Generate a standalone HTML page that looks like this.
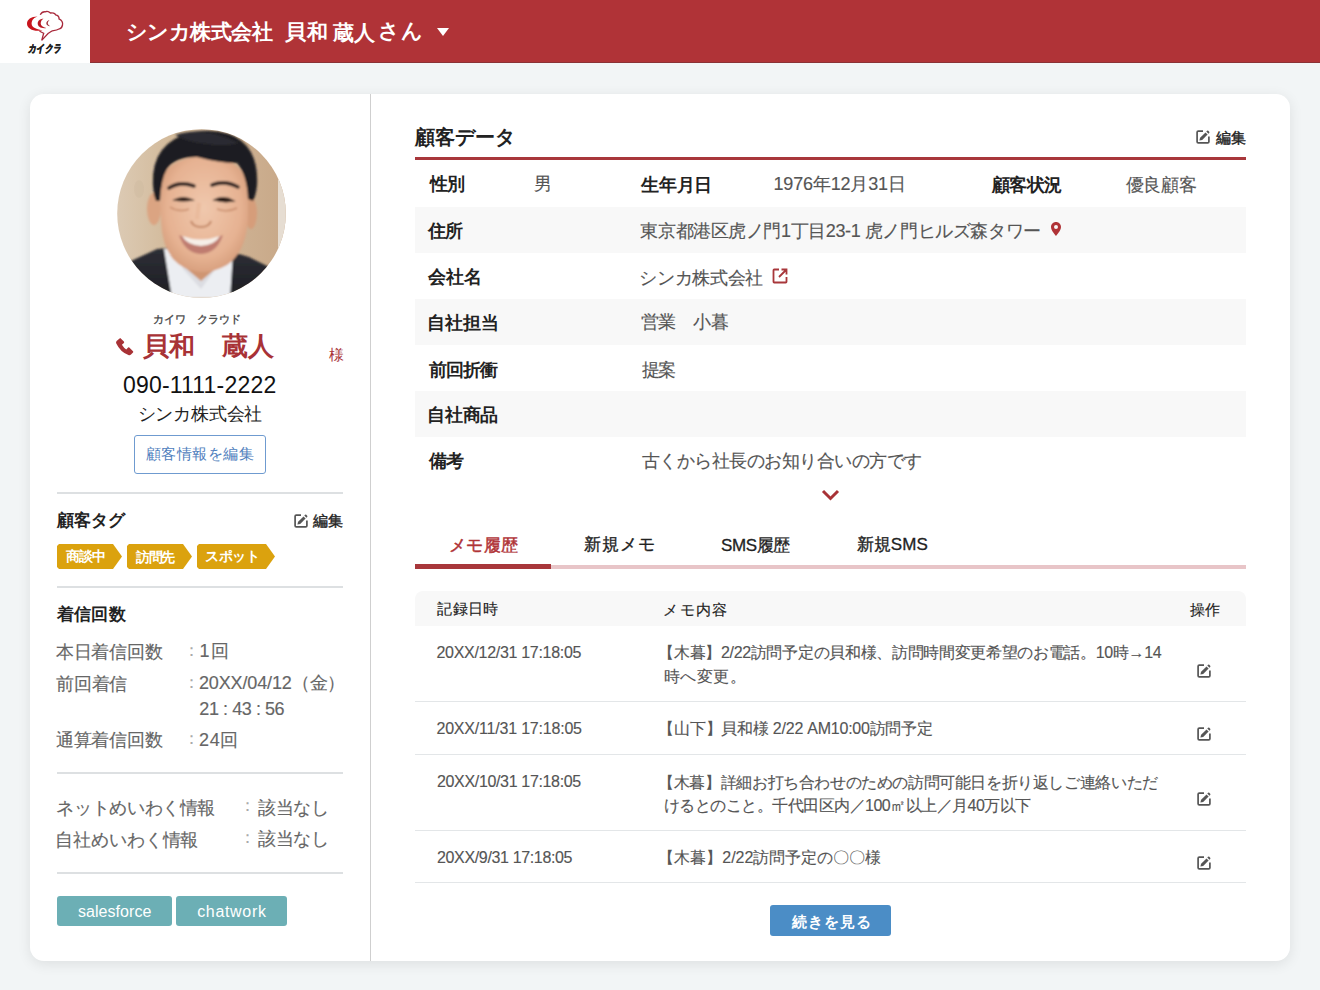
<!DOCTYPE html>
<html lang="ja"><head><meta charset="utf-8">
<style>
*{box-sizing:border-box;margin:0;padding:0}
html,body{width:1320px;height:990px;overflow:hidden}
body{background:#f2f5f6;font-family:"Liberation Sans",sans-serif;color:#333;position:relative}
.a{position:absolute;white-space:nowrap;line-height:1}
#hdr{position:absolute;left:0;top:0;width:90px;height:63px;background:#fff}
#hdrRed{position:absolute;left:90px;top:0;width:1230px;height:63px;background:#b03337;border-bottom:1px solid #8a3236}
#card{position:absolute;left:30px;top:94px;width:1260px;height:867px;background:#fff;border-radius:14px;box-shadow:0 3px 14px rgba(0,0,0,0.09)}
#vdiv{position:absolute;left:370px;top:94px;width:1px;height:867px;background:#cfcfcf}
.hr{position:absolute;left:57px;width:286px;height:2px;background:#dde0e2}
.tag{position:absolute;top:544px;height:25px;background:#dba20e;clip-path:polygon(0 8%,2px 0,calc(100% - 9px) 0,100% 50%,calc(100% - 9px) 100%,2px 100%,0 92%)}
.ext{position:absolute;top:896px;height:30px;background:#6cafb5;border-radius:3px}
.band{position:absolute;left:415px;width:831px;height:46px;background:#f8f8f8}
.rl{position:absolute;left:415px;width:831px;height:1px;background:#e3e6e8}
</style></head><body>

<div id="hdr"></div>
<div id="hdrRed"></div>
<svg class="a" style="left:0;top:0" width="90" height="63" viewBox="0 0 90 63">
<path d="M37.5 16.6C31 16.6 27 19.8 27 23.7C27 27.8 31.5 30.8 38 30.8C40 30.8 41.5 30.6 42.5 30.3C38 29.6 31.6 27.8 31.6 23.7C31.6 19.8 34.5 17.4 37.5 16.6Z" fill="#c8141c"/>
<path d="M43.5 18.8C39.8 18.8 37.7 21 37.7 23.5C37.7 26.2 40.2 28.2 44.5 28.2C45.2 28.2 45.8 28.1 46.2 28C43 27.3 40.7 25.7 40.7 23.5C40.7 21.3 42 19.6 43.5 18.8Z" fill="#b81822"/>
<path d="M49.5 20C47.6 20.5 46.3 22 46.3 23.3C46.3 25 47.8 26.2 50.3 26.2C48.6 25.5 47.8 24.4 47.8 23.3C47.8 22 48.6 20.8 49.5 20Z" fill="#a0303a"/>
<path d="M40.2 14.8C41.5 12.5 43 11.6 45 11.8C47 10.8 49.5 11.8 50.5 13C52.6 12.5 55 13.5 55.6 14.8C58 15.2 59.3 17 59 18.8C61.5 20 63 22.5 62.5 25C62 27.5 60.5 28.6 59.5 28.8C57.5 30.2 54.5 30.6 52.3 30.8C51 31.6 49.5 32.6 48.3 33.3L41.7 40.4L43.7 33.3C42.5 32.6 41 32 39.5 31" stroke="#a8283a" stroke-width="1.3" fill="none"/>
<text x="28" y="52.3" font-size="10.5" font-weight="bold" fill="#222" stroke="#222" stroke-width="0.6" font-style="italic" textLength="33" lengthAdjust="spacingAndGlyphs">カイクラ</text>
</svg>
<svg class="a" style="left:437px;top:28px" width="12" height="8" viewBox="0 0 12 8"><path d="M0 0H12L6 8Z" fill="#fff"/></svg>

<div id="card"></div>
<div id="vdiv"></div>

<!-- avatar -->
<svg class="a" style="left:117px;top:129px" width="169" height="169" viewBox="0 0 169 169">
<defs><clipPath id="cc"><circle cx="84.5" cy="84.5" r="84.3"/></clipPath>
<linearGradient id="wood" x1="0" x2="1"><stop offset="0" stop-color="#dccab4"/><stop offset="0.3" stop-color="#d3bb9c"/><stop offset="0.75" stop-color="#cdb091"/><stop offset="1" stop-color="#c8a888"/></linearGradient>
<radialGradient id="skin" cx="0.5" cy="0.45" r="0.6"><stop offset="0" stop-color="#f0c8ad"/><stop offset="0.7" stop-color="#e6b292"/><stop offset="1" stop-color="#d49a78"/></radialGradient>
<linearGradient id="suit" x1="0" x2="0" y1="0" y2="1"><stop offset="0" stop-color="#2e2f36"/><stop offset="1" stop-color="#1d1e24"/></linearGradient>
<filter id="bl" x="-10%" y="-10%" width="120%" height="120%"><feGaussianBlur stdDeviation="0.8"/></filter>
</defs>
<g clip-path="url(#cc)">
<rect width="169" height="169" fill="url(#wood)"/>
<ellipse cx="22" cy="60" rx="5" ry="9" fill="#bfa58a" opacity="0.15"/>
<rect x="161" y="50" width="8" height="70" fill="#e6ddd2"/>
<g filter="url(#bl)">
<path d="M0 150 L14 132 L40 120 L60 118 L84 126 L112 122 L132 128 L152 138 L169 150 L169 169 L0 169Z" fill="url(#suit)"/>
<path d="M47 120 Q56 119 62 121 L84 150 L104 125 Q112 122 116 124 L113 169 L55 169Z" fill="#eceef2"/>
<path d="M62 121 L84 150 L104 125 L100 138 L84 160 L66 140Z" fill="#dcdde2"/>
<path d="M58 110 L110 110 L110 130 L84 152 L58 130Z" fill="#cf9572"/>
<ellipse cx="37" cy="80" rx="7" ry="16" fill="#dba482"/>
<ellipse cx="134" cy="84" rx="6" ry="16" fill="#d69d7a"/>
<path d="M43 60 Q44 30 86 27 Q128 29 131 60 L131 92 Q128 124 110 136 Q96 144 82 143 Q66 141 56 130 Q45 116 44 92Z" fill="url(#skin)"/>
<path d="M37 66 Q30 20 66 6 Q88 -2 112 5 Q142 16 140 56 Q139 66 136 72 L131 70 Q130 46 120 34 Q102 34 80 28 Q58 28 50 40 Q44 50 43 72 L39 72Z" fill="#1c1c20"/>
<path d="M58 6 Q88 -4 122 14 Q108 18 90 15 Q72 14 58 6Z" fill="#2c2c30"/>
<path d="M52 59 Q63 52 77 57" stroke="#2e2420" stroke-width="3.6" fill="none" stroke-linecap="round"/>
<path d="M95 56 Q108 51 121 58" stroke="#2e2420" stroke-width="3.6" fill="none" stroke-linecap="round"/>
<path d="M57 71 Q66 66 76 71 Q66 73 57 71Z" fill="#2a1c18" stroke="#2a1c18" stroke-width="1.2"/>
<path d="M97 71 Q107 66 117 72 Q107 74 97 71Z" fill="#2a1c18" stroke="#2a1c18" stroke-width="1.2"/>
<path d="M53 78 Q62 84 72 80" stroke="#c98d6c" stroke-width="1.5" fill="none"/>
<path d="M100 80 Q110 84 120 79" stroke="#c98d6c" stroke-width="1.5" fill="none"/>
<path d="M74 92 Q76 98 84 98 Q92 98 94 92" stroke="#c48867" stroke-width="2.2" fill="none"/>
<path d="M82 74 L80 90" stroke="#e6b494" stroke-width="4" fill="none" opacity="0.6"/>
<path d="M62 106 Q84 116 106 106 Q100 124 84 125 Q68 124 62 106Z" fill="#bf7c70"/>
<path d="M65 107 Q84 114 103 107 Q98 116 84 117 Q70 116 65 107Z" fill="#f6efe8"/>
</g>
</g></svg>

<svg class="a" style="left:115px;top:337px" width="19" height="19" viewBox="0 0 19 19"><path fill="#a83236" d="M5.2 0.9L8.9 4.6Q9.5 5.2 8.9 5.9L6.9 7.8Q8.8 11 11.3 12.4L13.1 10.6Q13.7 10 14.3 10.6L18 14.3Q18.6 14.9 18 15.6L16 17.6Q15 18.6 13.4 18.1Q5.5 15.3 1.3 6.6Q0.6 5 1.6 3.9Z"/></svg>
<div class="a" style="left:134px;top:435px;width:132px;height:39px;border:1px solid #6f9bd0;border-radius:3px"></div>

<div class="hr" style="top:492px"></div>
<svg class="a" style="left:294px;top:514px" width="14" height="14" viewBox="0 0 14 14"><path d="M7 1.1H2.3Q1.1 1.1 1.1 2.3V11.7Q1.1 12.9 2.3 12.9H11.7Q12.9 12.9 12.9 11.7V6.6" stroke="#555" stroke-width="1.7" fill="none"/><path d="M3.4 10.6L4.1 7.8L9.5 2.4L11.6 4.5L6.2 9.9Z" fill="#555"/><path d="M10.3 1.6L11.1 0.8Q11.7 0.3 12.3 0.8L13.2 1.7Q13.7 2.3 13.2 2.9L12.4 3.7Z" fill="#555"/></svg>
<div class="tag" style="left:57px;width:65px"></div>
<div class="tag" style="left:127px;width:65px"></div>
<div class="tag" style="left:197px;width:78px"></div>
<div class="hr" style="top:586px"></div>
<div class="hr" style="top:772px"></div>
<div class="hr" style="top:872px"></div>
<div class="ext" style="left:57px;width:115px"></div>
<div class="ext" style="left:176px;width:111px"></div>


<!-- right -->
<svg class="a" style="left:1196px;top:130px" width="14" height="14" viewBox="0 0 14 14"><path d="M7 1.1H2.3Q1.1 1.1 1.1 2.3V11.7Q1.1 12.9 2.3 12.9H11.7Q12.9 12.9 12.9 11.7V6.6" stroke="#555" stroke-width="1.7" fill="none"/><path d="M3.4 10.6L4.1 7.8L9.5 2.4L11.6 4.5L6.2 9.9Z" fill="#555"/><path d="M10.3 1.6L11.1 0.8Q11.7 0.3 12.3 0.8L13.2 1.7Q13.7 2.3 13.2 2.9L12.4 3.7Z" fill="#555"/></svg>
<div class="a" style="left:415px;top:157px;width:831px;height:3px;background:#a8373b"></div>
<div class="band" style="top:207px"></div>
<div class="band" style="top:299px"></div>
<div class="band" style="top:391px"></div>
<svg class="a" style="left:1051px;top:222px" width="10" height="14" viewBox="0 0 10 14"><path d="M5 0C2.2 0 0 2.2 0 5c0 3.5 5 9 5 9s5-5.5 5-9C10 2.2 7.8 0 5 0zm0 7a2 2 0 110-4 2 2 0 010 4z" fill="#b03337"/></svg>
<svg class="a" style="left:772px;top:268px" width="16" height="16" viewBox="0 0 16 16"><path d="M7 1.5H2.2Q1.5 1.5 1.5 2.2V13.8Q1.5 14.5 2.2 14.5H13.8Q14.5 14.5 14.5 13.8V9" stroke="#a8373b" stroke-width="1.8" fill="none"/><path d="M9.5 1.5H14.5V6.5M14.5 1.5L7 9" stroke="#a8373b" stroke-width="1.8" fill="none"/></svg>
<svg class="a" style="left:821px;top:489px" width="19" height="12" viewBox="0 0 19 12"><path d="M2 2L9.5 9.5L17 2" stroke="#a83236" stroke-width="3" fill="none"/></svg>

<div class="a" style="left:415px;top:565px;width:831px;height:4px;background:#e8c5c8"></div>
<div class="a" style="left:415px;top:564px;width:136px;height:5px;background:#a8373b"></div>

<div class="a" style="left:415px;top:591px;width:831px;height:35px;background:#f8f8f8;border-radius:8px 8px 0 0"></div>

<div class="rl" style="top:701px"></div>
<div class="rl" style="top:754px"></div>
<div class="rl" style="top:830px"></div>
<div class="rl" style="top:882px"></div>
<svg class="a" style="left:1197px;top:664px" width="14" height="14" viewBox="0 0 14 14"><path d="M7 1.1H2.3Q1.1 1.1 1.1 2.3V11.7Q1.1 12.9 2.3 12.9H11.7Q12.9 12.9 12.9 11.7V6.6" stroke="#555" stroke-width="1.7" fill="none"/><path d="M3.4 10.6L4.1 7.8L9.5 2.4L11.6 4.5L6.2 9.9Z" fill="#555"/><path d="M10.3 1.6L11.1 0.8Q11.7 0.3 12.3 0.8L13.2 1.7Q13.7 2.3 13.2 2.9L12.4 3.7Z" fill="#555"/></svg>
<svg class="a" style="left:1197px;top:727px" width="14" height="14" viewBox="0 0 14 14"><path d="M7 1.1H2.3Q1.1 1.1 1.1 2.3V11.7Q1.1 12.9 2.3 12.9H11.7Q12.9 12.9 12.9 11.7V6.6" stroke="#555" stroke-width="1.7" fill="none"/><path d="M3.4 10.6L4.1 7.8L9.5 2.4L11.6 4.5L6.2 9.9Z" fill="#555"/><path d="M10.3 1.6L11.1 0.8Q11.7 0.3 12.3 0.8L13.2 1.7Q13.7 2.3 13.2 2.9L12.4 3.7Z" fill="#555"/></svg>
<svg class="a" style="left:1197px;top:792px" width="14" height="14" viewBox="0 0 14 14"><path d="M7 1.1H2.3Q1.1 1.1 1.1 2.3V11.7Q1.1 12.9 2.3 12.9H11.7Q12.9 12.9 12.9 11.7V6.6" stroke="#555" stroke-width="1.7" fill="none"/><path d="M3.4 10.6L4.1 7.8L9.5 2.4L11.6 4.5L6.2 9.9Z" fill="#555"/><path d="M10.3 1.6L11.1 0.8Q11.7 0.3 12.3 0.8L13.2 1.7Q13.7 2.3 13.2 2.9L12.4 3.7Z" fill="#555"/></svg>
<svg class="a" style="left:1197px;top:856px" width="14" height="14" viewBox="0 0 14 14"><path d="M7 1.1H2.3Q1.1 1.1 1.1 2.3V11.7Q1.1 12.9 2.3 12.9H11.7Q12.9 12.9 12.9 11.7V6.6" stroke="#555" stroke-width="1.7" fill="none"/><path d="M3.4 10.6L4.1 7.8L9.5 2.4L11.6 4.5L6.2 9.9Z" fill="#555"/><path d="M10.3 1.6L11.1 0.8Q11.7 0.3 12.3 0.8L13.2 1.7Q13.7 2.3 13.2 2.9L12.4 3.7Z" fill="#555"/></svg>
<div class="a" style="left:770px;top:905px;width:121px;height:31px;background:#4b8dc6;border-radius:3px"></div>

<div class="a" id="t1" style="left:125.64px;top:21.10px;font-size:21.00px;font-weight:bold;color:#fff;letter-spacing:-0.50px;">シンカ株式会社</div>
<div class="a" id="t2" style="left:284.90px;top:21.10px;font-size:21.00px;font-weight:bold;color:#fff;letter-spacing:0.90px;">貝和</div>
<div class="a" id="t2b" style="left:332.52px;top:22.00px;font-size:21.00px;font-weight:bold;color:#fff;letter-spacing:0.72px;">蔵人</div>
<div class="a" id="t2c" style="left:378.00px;top:20.18px;font-size:21.00px;font-weight:bold;color:#fff;letter-spacing:0.84px;">さん</div>
<div class="a" id="furi" style="left:153.00px;top:314.10px;font-size:11.00px;font-weight:bold;color:#555;">カイワ　クラウド</div>
<div class="a" id="name" style="left:142.90px;top:333.10px;font-size:26.00px;font-weight:bold;color:#a83236;letter-spacing:0.22px;">貝和　蔵人</div>
<div class="a" id="sama" style="left:328.90px;top:347.00px;font-size:15.00px;font-weight:normal;color:#a83236;">様</div>
<div class="a" id="tel" style="left:123.00px;top:373.90px;font-size:23.00px;font-weight:normal;color:#111;letter-spacing:0.19px;">090-1111-2222</div>
<div class="a" id="co" style="left:137.64px;top:405.14px;font-size:18.00px;font-weight:normal;color:#222;letter-spacing:-0.20px;">シンカ株式会社</div>
<div class="a" id="editbtn" style="left:146.00px;top:446.10px;font-size:15.00px;font-weight:normal;color:#4f80bd;letter-spacing:0.48px;">顧客情報を編集</div>
<div class="a" id="tagh" style="left:56.90px;top:511.90px;font-size:17.00px;font-weight:bold;color:#222;">顧客タグ</div>
<div class="a" id="tagedit" style="left:312.90px;top:513.18px;font-size:15.00px;font-weight:normal;color:#222;-webkit-text-stroke:0.4px #222;">編集</div>
<div class="a" id="tg1" style="left:65.90px;top:549.10px;font-size:14.00px;font-weight:bold;color:#fff;letter-spacing:-0.90px;">商談中</div>
<div class="a" id="tg2" style="left:135.90px;top:549.55px;font-size:14.00px;font-weight:bold;color:#fff;letter-spacing:-1.20px;">訪問先</div>
<div class="a" id="tg3" style="left:205.10px;top:549.10px;font-size:14.00px;font-weight:bold;color:#fff;letter-spacing:-0.30px;">スポット</div>
<div class="a" id="chak" style="left:56.90px;top:605.90px;font-size:17.00px;font-weight:bold;color:#222;letter-spacing:0.30px;">着信回数</div>
<div class="a" id="hon" style="left:56.00px;top:643.36px;font-size:18.00px;font-weight:normal;color:#666;letter-spacing:-0.27px;-webkit-text-stroke:0.15px #666;">本日着信回数</div>
<div class="a" id="c1" style="left:182.56px;top:641.95px;font-size:17.00px;font-weight:normal;color:#aaa;">：</div>
<div class="a" id="v1" style="left:199.54px;top:642.28px;font-size:18.00px;font-weight:normal;color:#666;letter-spacing:1.11px;-webkit-text-stroke:0.15px #666;">1回</div>
<div class="a" id="zen" style="left:56.00px;top:674.50px;font-size:18.00px;font-weight:normal;color:#666;letter-spacing:-0.18px;-webkit-text-stroke:0.15px #666;">前回着信</div>
<div class="a" id="c2" style="left:182.56px;top:673.88px;font-size:17.00px;font-weight:normal;color:#aaa;">：</div>
<div class="a" id="v2" style="left:199.00px;top:673.83px;font-size:18.00px;font-weight:normal;color:#666;letter-spacing:-0.14px;-webkit-text-stroke:0.15px #666;">20XX/04/12（金）</div>
<div class="a" id="v2b" style="left:199.36px;top:699.86px;font-size:18.00px;font-weight:normal;color:#666;letter-spacing:-0.44px;-webkit-text-stroke:0.15px #666;">21 : 43 : 56</div>
<div class="a" id="tsu" style="left:56.00px;top:731.24px;font-size:18.00px;font-weight:normal;color:#666;letter-spacing:-0.27px;-webkit-text-stroke:0.15px #666;">通算着信回数</div>
<div class="a" id="c3" style="left:182.56px;top:729.78px;font-size:17.00px;font-weight:normal;color:#aaa;">：</div>
<div class="a" id="v3" style="left:199.00px;top:730.80px;font-size:18.00px;font-weight:normal;color:#666;letter-spacing:0.63px;-webkit-text-stroke:0.15px #666;">24回</div>
<div class="a" id="net" style="left:56.36px;top:798.56px;font-size:18.00px;font-weight:normal;color:#666;letter-spacing:-0.37px;-webkit-text-stroke:0.15px #666;">ネットめいわく情報</div>
<div class="a" id="c4" style="left:239.30px;top:797.20px;font-size:17.00px;font-weight:normal;color:#aaa;">：</div>
<div class="a" id="ga1" style="left:258.00px;top:798.56px;font-size:18.00px;font-weight:normal;color:#666;letter-spacing:-0.33px;-webkit-text-stroke:0.15px #666;">該当なし</div>
<div class="a" id="jis" style="left:55.46px;top:830.90px;font-size:18.00px;font-weight:normal;color:#666;letter-spacing:-0.14px;-webkit-text-stroke:0.15px #666;">自社めいわく情報</div>
<div class="a" id="c5" style="left:239.30px;top:829.20px;font-size:17.00px;font-weight:normal;color:#aaa;">：</div>
<div class="a" id="ga2" style="left:258.00px;top:830.14px;font-size:18.00px;font-weight:normal;color:#666;letter-spacing:-0.33px;-webkit-text-stroke:0.15px #666;">該当なし</div>
<div class="a" id="sf" style="left:78.00px;top:904.36px;font-size:16.00px;font-weight:normal;color:#fff;letter-spacing:0.05px;">salesforce</div>
<div class="a" id="cw" style="left:197.18px;top:904.36px;font-size:16.00px;font-weight:normal;color:#fff;letter-spacing:0.67px;">chatwork</div>
<div class="a" id="kd" style="left:415.16px;top:127.42px;font-size:20.00px;font-weight:bold;color:#222;letter-spacing:-0.02px;">顧客データ</div>
<div class="a" id="kdedit" style="left:1215.62px;top:129.66px;font-size:15.00px;font-weight:normal;color:#222;letter-spacing:0.72px;-webkit-text-stroke:0.4px #222;">編集</div>
<div class="a" id="seibetsu" style="left:430.16px;top:175.16px;font-size:18.00px;font-weight:bold;color:#222;letter-spacing:-1.20px;">性別</div>
<div class="a" id="otoko" style="left:534.00px;top:175.10px;font-size:18.00px;font-weight:normal;color:#555;-webkit-text-stroke:0.15px #555;">男</div>
<div class="a" id="seinen" style="left:641.26px;top:175.50px;font-size:18.00px;font-weight:bold;color:#222;letter-spacing:-0.30px;">生年月日</div>
<div class="a" id="birth" style="left:773.46px;top:175.06px;font-size:18.00px;font-weight:normal;color:#555;letter-spacing:-0.17px;-webkit-text-stroke:0.15px #555;">1976年12月31日</div>
<div class="a" id="jokyo" style="left:991.90px;top:175.50px;font-size:18.00px;font-weight:bold;color:#222;letter-spacing:-0.60px;">顧客状況</div>
<div class="a" id="yuryo" style="left:1125.54px;top:175.64px;font-size:18.00px;font-weight:normal;color:#555;letter-spacing:-0.33px;-webkit-text-stroke:0.15px #555;">優良顧客</div>
<div class="a" id="jusho" style="left:428.36px;top:222.40px;font-size:18.00px;font-weight:bold;color:#222;letter-spacing:-1.20px;">住所</div>
<div class="a" id="addr" style="left:640.36px;top:222.38px;font-size:18.00px;font-weight:normal;color:#555;letter-spacing:-0.41px;-webkit-text-stroke:0.15px #555;">東京都港区虎ノ門1丁目23-1 虎ノ門ヒルズ森タワー</div>
<div class="a" id="kaisha" style="left:428.36px;top:267.82px;font-size:18.00px;font-weight:bold;color:#222;letter-spacing:-0.27px;">会社名</div>
<div class="a" id="kaishav" style="left:639.46px;top:268.80px;font-size:18.00px;font-weight:normal;color:#555;letter-spacing:-0.35px;-webkit-text-stroke:0.15px #555;">シンカ株式会社</div>
<div class="a" id="tanto" style="left:427.46px;top:313.56px;font-size:18.00px;font-weight:bold;color:#222;letter-spacing:-0.03px;">自社担当</div>
<div class="a" id="eigyo" style="left:640.72px;top:313.09px;font-size:18.00px;font-weight:normal;color:#555;letter-spacing:-0.46px;-webkit-text-stroke:0.15px #555;">営業　小暮</div>
<div class="a" id="zenkai" style="left:429.26px;top:360.50px;font-size:18.00px;font-weight:bold;color:#222;letter-spacing:-1.14px;">前回折衝</div>
<div class="a" id="teian" style="left:641.62px;top:360.90px;font-size:18.00px;font-weight:normal;color:#555;letter-spacing:-1.20px;-webkit-text-stroke:0.15px #555;">提案</div>
<div class="a" id="shohin" style="left:427.46px;top:406.00px;font-size:18.00px;font-weight:bold;color:#222;letter-spacing:-0.39px;">自社商品</div>
<div class="a" id="bikou" style="left:429.26px;top:451.91px;font-size:18.00px;font-weight:bold;color:#222;letter-spacing:-1.20px;">備考</div>
<div class="a" id="furuku" style="left:641.62px;top:451.91px;font-size:18.00px;font-weight:normal;color:#555;letter-spacing:-0.50px;-webkit-text-stroke:0.15px #555;">古くから社長のお知り合いの方です</div>
<div class="a" id="tab1" style="left:448.90px;top:536.91px;font-size:17.00px;font-weight:normal;color:#b03337;letter-spacing:0.51px;-webkit-text-stroke:0.45px #b03337;">メモ履歴</div>
<div class="a" id="tab2" style="left:584.26px;top:536.46px;font-size:17.00px;font-weight:normal;color:#222;letter-spacing:0.75px;-webkit-text-stroke:0.3px #222;">新規メモ</div>
<div class="a" id="tab3" style="left:720.90px;top:537.36px;font-size:17.00px;font-weight:normal;color:#222;letter-spacing:-0.34px;-webkit-text-stroke:0.3px #222;">SMS履歴</div>
<div class="a" id="tab4" style="left:856.54px;top:536.46px;font-size:17.00px;font-weight:normal;color:#222;letter-spacing:0.09px;-webkit-text-stroke:0.3px #222;">新規SMS</div>
<div class="a" id="th1" style="left:437.26px;top:601.37px;font-size:15.00px;font-weight:normal;color:#222;letter-spacing:0.30px;-webkit-text-stroke:0.15px #222;">記録日時</div>
<div class="a" id="th2" style="left:663.46px;top:602.27px;font-size:15.00px;font-weight:normal;color:#222;letter-spacing:1.20px;-webkit-text-stroke:0.15px #222;">メモ内容</div>
<div class="a" id="th3" style="left:1189.90px;top:601.82px;font-size:15.00px;font-weight:normal;color:#222;letter-spacing:-0.36px;-webkit-text-stroke:0.15px #222;">操作</div>
<div class="a" id="d1" style="left:436.46px;top:644.68px;font-size:16.00px;font-weight:normal;color:#555;letter-spacing:-0.30px;-webkit-text-stroke:0.15px #555;">20XX/12/31 17:18:05</div>
<div class="a" id="m1" style="left:658.24px;top:645.36px;font-size:16.00px;font-weight:normal;color:#555;letter-spacing:-0.32px;-webkit-text-stroke:0.15px #555;">【木暮】2/22訪問予定の貝和様、訪問時間変更希望のお電話。10時→14</div>
<div class="a" id="m1b" style="left:663.64px;top:669.35px;font-size:16.00px;font-weight:normal;color:#555;letter-spacing:0.49px;-webkit-text-stroke:0.15px #555;">時へ変更。</div>
<div class="a" id="d2" style="left:436.46px;top:720.90px;font-size:16.00px;font-weight:normal;color:#555;letter-spacing:-0.20px;-webkit-text-stroke:0.15px #555;">20XX/11/31 17:18:05</div>
<div class="a" id="m2" style="left:658.24px;top:721.08px;font-size:16.00px;font-weight:normal;color:#555;letter-spacing:-0.23px;-webkit-text-stroke:0.15px #555;">【山下】貝和様 2/22 AM10:00訪問予定</div>
<div class="a" id="d3" style="left:437.00px;top:773.72px;font-size:16.00px;font-weight:normal;color:#555;letter-spacing:-0.34px;-webkit-text-stroke:0.15px #555;">20XX/10/31 17:18:05</div>
<div class="a" id="m3" style="left:658.24px;top:774.71px;font-size:16.00px;font-weight:normal;color:#555;letter-spacing:-0.39px;-webkit-text-stroke:0.15px #555;">【木暮】詳細お打ち合わせのための訪問可能日を折り返しご連絡いただ</div>
<div class="a" id="m3b" style="left:663.64px;top:798.26px;font-size:16.00px;font-weight:normal;color:#555;letter-spacing:-0.51px;-webkit-text-stroke:0.15px #555;">けるとのこと。千代田区内／100㎡以上／月40万以下</div>
<div class="a" id="d4" style="left:437.00px;top:849.82px;font-size:16.00px;font-weight:normal;color:#555;letter-spacing:-0.35px;-webkit-text-stroke:0.15px #555;">20XX/9/31 17:18:05</div>
<div class="a" id="m4" style="left:658.24px;top:850.00px;font-size:16.00px;font-weight:normal;color:#555;-webkit-text-stroke:0.15px #555;">【木暮】2/22訪問予定の〇〇様</div>
<div class="a" id="more" style="left:792.45px;top:913.90px;font-size:15.00px;font-weight:bold;color:#fff;letter-spacing:0.79px;">続きを見る</div>
</body></html>
